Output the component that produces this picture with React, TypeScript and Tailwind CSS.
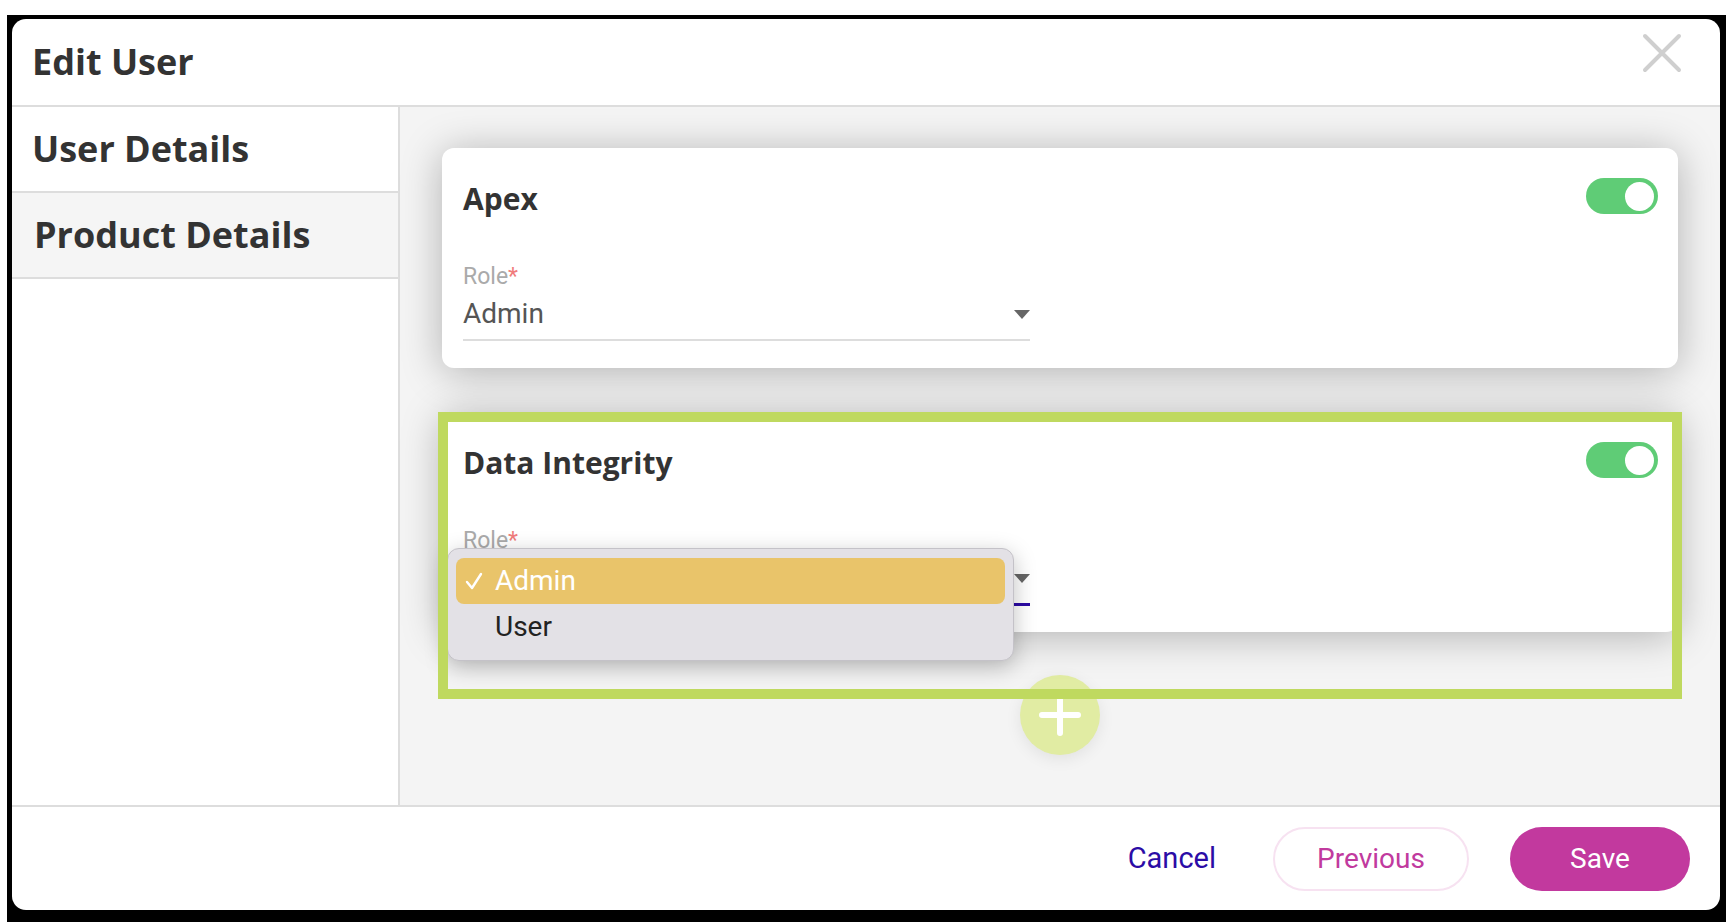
import React from 'react';

const heading = "font-['Open_Sans',sans-serif] font-bold text-[#333]";
const body = "font-['Roboto',sans-serif]";

const Toggle = () => (
  <div className="w-[72px] h-[36px] rounded-full bg-[#5fcc76] flex items-center justify-end pr-[4px]">
    <div className="w-[29px] h-[29px] rounded-full bg-white" />
  </div>
);

const Caret = () => (
  <svg width="16" height="9" viewBox="0 0 16 9">
    <path d="M0 0 L16 0 L8 9 Z" fill="#666" />
  </svg>
);

const ProductCard = ({ name, focused, children }: { name: string; focused?: boolean; children?: React.ReactNode }) => (
  <div className="relative h-[220px] rounded-[12px] bg-white pt-[30px] pl-[21px] pr-[20px] shadow-[0_4px_40px_rgba(0,0,0,0.28)]">
    <div className="flex h-[36px] items-center justify-between">
      <div className={`${heading} pt-[6px] text-[30px] leading-none`}>{name}</div>
      <Toggle />
    </div>
    <div className={`${body} mt-[50px] w-[567px]`}>
      <div className="text-[23px] leading-[26px] text-[#aaa]">
        Role<span className="text-[#f07c7c]">*</span>
      </div>
      <div
        className={`mt-[7px] flex items-center justify-between pb-[8px] ${
          focused ? 'border-b-[3px] border-[#2c0ba5]' : 'border-b-2 border-[#ddd]'
        }`}
      >
        <span className="text-[28px] leading-[34px] text-[#555]">Admin</span>
        <Caret />
      </div>
    </div>
    {children}
  </div>
);

const Dropdown = () => (
  <div className={`${body} absolute left-[5px] top-[136px] z-10 w-[567px] rounded-[12px] border border-[#c4c2c8] bg-[#e3e1e6] px-[8px] pt-[9px] pb-[10px] shadow-[0_6px_22px_rgba(0,0,0,0.25)]`}>
    <div className="flex h-[46px] items-center rounded-[8px] bg-[#e9c46a] pl-[9px] text-white">
      <svg width="18" height="18" viewBox="0 0 18 18" className="mr-[12px]">
        <path d="M2 10 L7 16 L16 2" fill="none" stroke="white" strokeWidth="2.4" strokeLinecap="round" strokeLinejoin="round" />
      </svg>
      <span className="text-[28px] leading-none">Admin</span>
    </div>
    <div className="flex h-[46px] items-center pl-[39px] text-[28px] leading-none text-[#222]">User</div>
  </div>
);

const App = () => {
  return (
    <div className="min-h-screen bg-white pt-[15px] pl-[7px]">
      <div className="w-[1719px] h-[907px] bg-black pt-[4px] pl-[5px] pr-[6px]">
        <div className="flex h-[891px] flex-col overflow-hidden rounded-[14px] bg-white">
          {/* header */}
          <div className="flex h-[88px] shrink-0 justify-between border-b-2 border-[#ddd] pl-[20px] pr-[38px]">
            <div className={`${heading} self-center text-[36px] leading-none`}>Edit User</div>
            <svg width="40" height="40" viewBox="0 0 40 40" className="mt-[14px]">
              <path d="M3 3 L37 37 M37 3 L3 37" stroke="#cfcfcf" strokeWidth="4" strokeLinecap="round" />
            </svg>
          </div>

          {/* body */}
          <div className="flex flex-1">
            <div className="w-[388px] shrink-0 border-r-2 border-[#ddd] bg-white">
              <div className={`${heading} flex h-[86px] items-center border-b-2 border-[#ddd] pl-[20px] text-[36px]`}>
                User Details
              </div>
              <div className={`${heading} flex h-[86px] items-center border-b-2 border-[#ddd] bg-[#f5f5f5] pl-[22px] text-[36px]`}>
                Product Details
              </div>
            </div>

            <div className="relative flex flex-1 flex-col bg-[#f4f4f4] px-[42px] pt-[41px]">
              <ProductCard name="Apex" />
              <div className="mt-[44px]">
                <ProductCard name="Data Integrity" focused>
                  <Dropdown />
                </ProductCard>
              </div>
              <div className="mt-[43px] flex justify-center">
                <div className="flex h-[80px] w-[80px] items-center justify-center rounded-full bg-[#e1eca3] shadow-[0_4px_16px_rgba(0,0,0,0.08)]">
                  <svg width="42" height="42" viewBox="0 0 42 42">
                    <path d="M21 3 V39 M3 21 H39" stroke="white" strokeWidth="6" strokeLinecap="round" />
                  </svg>
                </div>
              </div>
              {/* highlight outline */}
              <div className="pointer-events-none absolute left-[38px] top-[305px] z-20 h-[287px] w-[1244px] border-[10px] border-[#bfd95f]" />
            </div>
          </div>

          {/* footer */}
          <div className={`${body} flex h-[105px] shrink-0 items-center justify-end border-t-2 border-[#ddd] pr-[30px]`}>
            <button className="mr-[57px] text-[29px] text-[#2b0ca6]">Cancel</button>
            <button className="mr-[41px] h-[64px] w-[196px] rounded-full border-2 border-[#f7e2f1] text-[28px] text-[#c13a9e]">
              Previous
            </button>
            <button className="h-[64px] w-[180px] rounded-full bg-[#c2399e] text-[28px] text-white">Save</button>
          </div>
        </div>
      </div>
    </div>
  );
};

export default App;
